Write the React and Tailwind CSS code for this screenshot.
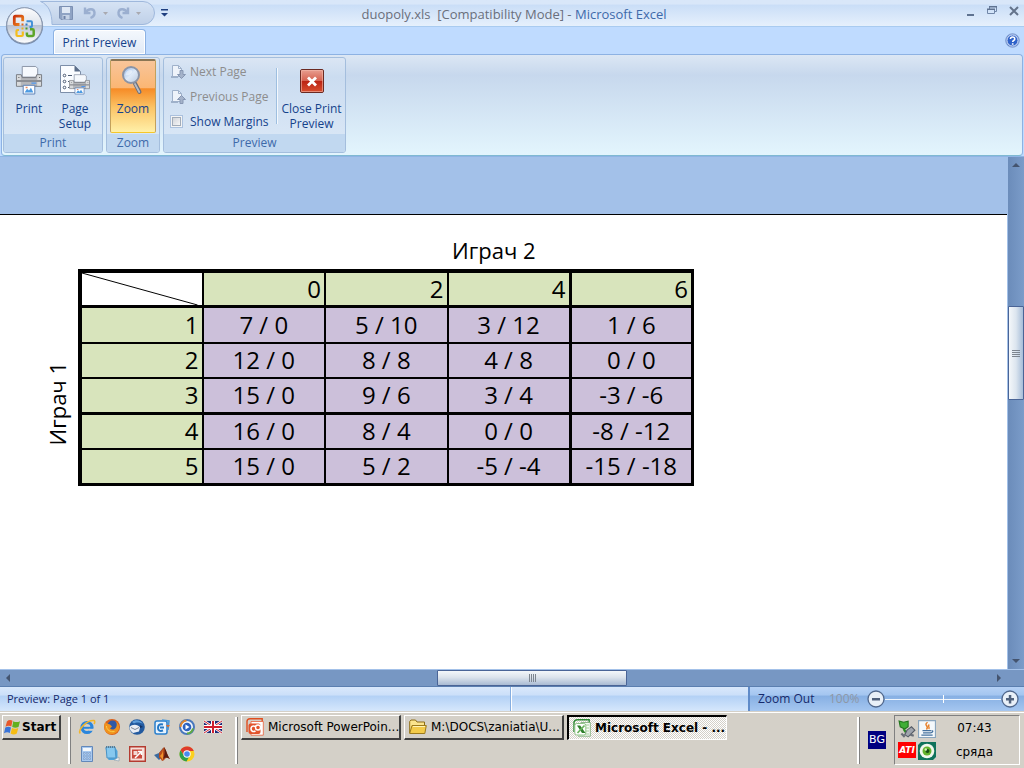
import React from "react";

const rows = [
  ["1", "7 / 0", "5 / 10", "3 / 12", "1 / 6"],
  ["2", "12 / 0", "8 / 8", "4 / 8", "0 / 0"],
  ["3", "15 / 0", "9 / 6", "3 / 4", "-3 / -6"],
  ["4", "16 / 0", "8 / 4", "0 / 0", "-8 / -12"],
  ["5", "15 / 0", "5 / 2", "-5 / -4", "-15 / -18"],
];

function OfficeOrb() {
  return (
    <svg viewBox="0 0 40 40" className="block h-10 w-10" aria-hidden="true">
      <defs>
        <linearGradient id="orb" x1="0" y1="0" x2="0" y2="1">
          <stop offset="0" stopColor="#fdfdfe" />
          <stop offset="0.48" stopColor="#dfe4ec" />
          <stop offset="0.5" stopColor="#b9c3d3" />
          <stop offset="1" stopColor="#ffffff" />
        </linearGradient>
        <linearGradient id="orbRed" x1="0" y1="0" x2="1" y2="1">
          <stop offset="0" stopColor="#c9330c" />
          <stop offset="1" stopColor="#f08c1e" />
        </linearGradient>
      </defs>
      <circle cx="20.500" cy="20" r="18.600" fill="#5d6f8d" opacity="0.75" />
      <circle cx="20.500" cy="19.500" r="17.800" fill="url(#orb)" stroke="#8b99b0" />
      <g fill="none">
        <path d="M15.500 18.500h-4q-1.200 0-1.200-1.200v-6q0-1.200 1.200-1.200h6q1.200 0 1.200 1.200v4" stroke="url(#orbRed)" strokeWidth="2.800" />
        <path d="M22.500 15.200h4.500q1 0 1 1v3.800q0 1-1 1h-1.500" stroke="#3f8fd6" strokeWidth="1.900" />
        <path d="M18.800 25.500v3.500q0 1-1 1h-4.300q-1 0-1-1v-4q0-1 1-1h1.500" stroke="#f4bd1d" strokeWidth="2.200" />
        <path d="M26 23.200h2.500q1.200 0 1.200 1.200v4.400q0 1.200-1.200 1.200h-4.400q-1.200 0-1.200-1.200v-2.300" stroke="#5da528" strokeWidth="2.500" />
      </g>
      <path d="M17.500 17.500h2v2h-2z" fill="#e0641a" />
      <path d="M21.500 17.500h2v2h-2z" fill="#2f7ac4" />
      <path d="M17.500 21.500h2v2h-2z" fill="#eab222" />
      <path d="M21.500 21.500h2v2h-2z" fill="#4b9a2a" />
    </svg>
  );
}

const SaveIcon = () => (
  <svg viewBox="0 0 14 14" className="h-3.5 w-3.5" aria-hidden="true">
    <path d="M.5.5h13v13H2L.5 12z" fill="#8fa3c4" stroke="#7c90b3" />
    <path d="M3 1h8v6H3z" fill="#dfe8f5" />
    <path d="M3.500 9h7v4.500h-7z" fill="#c5d2e6" />
    <path d="M4.500 10h2v3h-2z" fill="#6f83a8" />
  </svg>
);

const UndoIcon = () => (
  <svg viewBox="0 0 14 14" className="h-3.5 w-3.5" aria-hidden="true">
    <path d="M2 1.500v5.500h5.500M2.500 6.500C5 2.500 11 2 11.500 6.500c.2 2.500-1.500 4.500-4 5.500" fill="none" stroke="#9bafd0" strokeWidth="2.400" />
  </svg>
);

const RedoIcon = () => (
  <svg viewBox="0 0 14 14" className="h-3.5 w-3.5" aria-hidden="true">
    <path d="M12 1.500v5.500H6.500M11.500 6.500C9 2.500 3 2 2.500 6.500c-.2 2.500 1.500 4.500 4 5.500" fill="none" stroke="#9bafd0" strokeWidth="2.400" />
  </svg>
);

const DownMark = () => (
  <svg viewBox="0 0 5 3" className="h-[3px] w-[5px]" aria-hidden="true">
    <path d="M0 0h5L2.500 3z" fill="#a9a9b0" />
  </svg>
);

const PrinterShape = () => (
  <>
    <path d="M7.500 1h14l2 2v9h-16z" fill="#f6f9fd" stroke="#8a94a6" />
    <path d="M1.500 9.500h5l1 3h14l1-3h5v12h-26z" fill="#b4b6ba" stroke="#76797f" />
    <path d="M2 10h4v11H2zM23 10h4v11h-4z" fill="#d8dadc" />
    <path d="M2 15h25v2H2z" fill="#8b8e94" />
    <path d="M17 17.500h5v1.500h-5z" fill="#4f97ef" />
    <path d="M3.500 12h1v1h-1zM25 12h1v1h-1z" fill="#555" />
    <path d="M8.500 20.500h12v9h-12z" fill="#fff" stroke="#5a7fb5" />
    <path d="M10 28l2.500-4 2 2 2-3 2.500 5z" fill="#4d9be3" />
    <path d="M11 22h2v1.500h-2z" fill="#e58a63" />
  </>
);

const PrintIcon = () => (
  <svg viewBox="0 0 29 30" className="h-8 w-7" aria-hidden="true">
    <PrinterShape />
  </svg>
);

const PageSetupIcon = () => (
  <svg viewBox="0 0 32 32" className="h-8 w-8" aria-hidden="true">
    <path d="M1.500 1.500h14l6 6v21h-20z" fill="#fafcff" stroke="#7c8ea9" />
    <path d="M15.500 1.500l6 6h-6z" fill="#5c6e8a" />
    <g fill="#fff" stroke="#4b5a73">
      <circle cx="5.500" cy="11.500" r="1.300" />
      <circle cx="5.500" cy="17.500" r="1.300" />
      <circle cx="5.500" cy="23.500" r="1.300" />
      <path d="M9 11.500h4M9 17.500h1M9 23.500h1" />
    </g>
    <g transform="translate(9.500 10) scale(.76 .68)">
      <PrinterShape />
    </g>
  </svg>
);

const ZoomIcon = () => (
  <svg viewBox="0 0 32 32" className="h-8 w-8" aria-hidden="true">
    <defs>
      <linearGradient id="lens" x1="0" y1="0" x2="1" y2="1">
        <stop offset="0" stopColor="#8db4e8" />
        <stop offset="0.5" stopColor="#dfeaf8" />
        <stop offset="1" stopColor="#b9c8dc" />
      </linearGradient>
    </defs>
    <path d="M18 19.500l4.500 8.500" stroke="#6b6f79" strokeWidth="4" strokeLinecap="round" />
    <path d="M18 20l4.300 8" stroke="#b8bcc5" strokeWidth="1.800" strokeLinecap="round" />
    <circle cx="14" cy="11" r="8" fill="url(#lens)" stroke="#8c94a5" strokeWidth="2" />
    <path d="M8.500 10c1-4 5-5 7-3-1 3-3 4-7 4.500z" fill="#fff" opacity="0.45" />
  </svg>
);

function PageArrow({ up }) {
  return (
    <svg viewBox="0 0 16 16" className="h-4 w-4" aria-hidden="true">
      <path d="M2.500 1.500h6l3 3v8h-9z" fill="#eef3fa" stroke="#9fb1ca" />
      <path d="M8.500 1.500v3h3" fill="none" stroke="#9fb1ca" />
      <path d="M1 13h7" stroke="#9fb1ca" strokeWidth="2" />
      <path
        d={up ? "M11.500 6.500l4 4h-2.500v4h-3v-4H7.500z" : "M10 6.500h3v4h2.500l-4 4-4-4H10z"}
        fill="#a5b3ca"
        stroke="#8797b3"
      />
    </svg>
  );
}

const CloseIcon = () => (
  <svg viewBox="0 0 24 24" className="h-6 w-6" aria-hidden="true">
    <defs>
      <linearGradient id="closeRed" x1="0" y1="0" x2="0" y2="1">
        <stop offset="0" stopColor="#e9a092" />
        <stop offset="0.5" stopColor="#d5604e" />
        <stop offset="0.52" stopColor="#bc2414" />
        <stop offset="1" stopColor="#d9502f" />
      </linearGradient>
    </defs>
    <rect x="0.500" y="0.500" width="23" height="23" rx="1.500" fill="url(#closeRed)" stroke="#6a2a22" />
    <path d="M1.500 1.500h21v21h-21z" fill="none" stroke="#f3b9ac" opacity="0.600" />
    <path d="M8 8.500l8 8M16 8.500l-8 8" stroke="#fff" strokeWidth="2.800" />
  </svg>
);

const Triangle = ({ d }) => (
  <svg viewBox="0 0 10 10" className="h-2.5 w-2.5" aria-hidden="true">
    <path d={d} fill="#44546f" />
  </svg>
);

const WindowsIcon = () => (
  <svg viewBox="0 0 17 16" className="h-4 w-[17px]" aria-hidden="true">
    <path d="M3 2.500Q5.500 0 8.500 1.800L7.300 7.500Q4.500 6 1.500 7.800z" fill="#e8582a" />
    <path d="M9.300 2.200Q12.500 4 16 2.200L14.500 8Q11.500 9.500 8.200 8z" fill="#62b01e" />
    <path d="M1.300 8.600Q4.300 7 7 8.400L5.800 14Q3 12.500 0 14.300z" fill="#3a74d8" />
    <path d="M8 8.900Q11.300 10.500 14.300 9L12.800 14.500Q9.800 16.300 6.600 14.500z" fill="#f6bd14" />
  </svg>
);

const quick = [
  ["Internet Explorer", (
    <>
      <circle cx="8" cy="8.500" r="5" fill="none" stroke="#2a86dd" strokeWidth="3.200" />
      <path d="M3 8.800h10" stroke="#2a86dd" strokeWidth="2" />
      <path d="M10 10.800h6" stroke="#d4d0c8" strokeWidth="2" />
      <path d="M1 14.500C-1 10 8 1 15 1.500c1 .5 1 2 0 3.500" fill="none" stroke="#f2b52a" strokeWidth="1.600" />
    </>
  )],
  ["Firefox", (
    <>
      <circle cx="8" cy="8" r="8" fill="#d9601a" />
      <circle cx="8.500" cy="6.500" r="5" fill="#3158a5" />
      <path d="M1 3.500c1 1 3 1 5 2l2 2-2 2c2 2 5 1 6-1 1-2 1-4 0-6 4 3 4 8 1 10.500-3 3-8 3-11 0C0 11 0 6 1 3.500z" fill="#f0921e" />
      <path d="M2.500 7c0 4 4 6.500 8 5.500" fill="none" stroke="#fbd04a" />
    </>
  )],
  ["Thunderbird", (
    <>
      <circle cx="8" cy="8" r="7.800" fill="#235a9f" />
      <path d="M.5 8C3 5 9 5 11 8.500l-1 4-6 1.500C2 12.500.5 11 .5 8z" fill="#e9edf4" />
      <path d="M3 3c3-3 9-2 11 2-3-2-7-2-9-.5z" fill="#5d9ddb" />
      <path d="M2 8.500l4 2 4-2" fill="none" stroke="#7b8597" />
      <path d="M11 6l3 2-3 1z" fill="#122f60" />
    </>
  )],
  ["Outlook Express", (
    <>
      <rect x="1" y="2" width="12" height="13" rx="2" fill="#e8f3fd" stroke="#297fcd" strokeWidth="1.500" />
      <path d="M9 5.500c-4-1-5 1-5 3.500s2 3.500 5 2.500M6 8.500h4" fill="none" stroke="#2377c5" strokeWidth="2" />
      <path d="M8 1l7 1-1 9" fill="none" stroke="#4597dd" strokeWidth="1.500" />
      <path d="M12 6h4l-2 2.500z" fill="#df6a28" />
    </>
  )],
  ["Media Player", (
    <>
      <circle cx="8" cy="8" r="7" fill="#f2f5fa" stroke="#4978bd" strokeWidth="2" />
      <path d="M1.500 8a6.500 6.500 0 0 1 6-6.500" fill="none" stroke="#e1862f" strokeWidth="2" />
      <path d="M8 14.500a6.500 6.500 0 0 0 6-5" fill="none" stroke="#61a943" strokeWidth="2" />
      <circle cx="8" cy="8" r="4.300" fill="#2d62bf" />
      <path d="M6.500 5.500l4 2.500-4 2.500z" fill="#fff" />
    </>
  )],
  ["English (UK)", (
    <>
      <path d="M0 2h18v12H0z" fill="#1b2a78" />
      <path d="M0 2l18 12M18 2L0 14" stroke="#fff" strokeWidth="2.600" />
      <path d="M0 2l18 12M18 2L0 14" stroke="#d01f2e" />
      <path d="M9 2v12M0 8h18" stroke="#fff" strokeWidth="4" />
      <path d="M9 2v12M0 8h18" stroke="#d01f2e" strokeWidth="2" />
    </>
  )],
  ["Calculator", (
    <>
      <path d="M2.500.5h11v15h-11z" fill="#a9c9ef" stroke="#6288ba" />
      <path d="M4 2h8v3H4z" fill="#f4f8fc" />
      <g fill="#fff" stroke="#4d7cb8" strokeWidth=".5">
        <path d="M4.500 6.500h1.500v1.500H4.500zM7.300 6.500h1.500v1.500H7.300zM10 6.500h1.500v1.500H10zM4.500 9.300h1.500v1.500H4.500zM7.300 9.300h1.500v1.500H7.300zM10 9.300h1.500v1.500H10zM4.500 12h1.500v1.500H4.500zM7.300 12h1.500v1.500H7.300zM10 12h1.500v1.500H10z" />
      </g>
    </>
  )],
  ["Notepad", (
    <>
      <path d="M1.500 2h10l2 3v9h-9z" fill="#4da4dd" />
      <path d="M2 1h9l1 11H3z" fill="#86c8ef" stroke="#4a93c5" />
      <path d="M2 1h9" stroke="#5a7b92" strokeDasharray="1 1" strokeWidth="2" />
      <path d="M10 14l5 1v-4z" fill="#eceff2" stroke="#879cab" strokeWidth=".6" />
    </>
  )],
  ["Picture Manager", (
    <>
      <path d="M.7.7h15.600v14.600H.7z" fill="#f6dfd9" stroke="#b43b30" strokeWidth="1.400" />
      <path d="M3 3.500h10v9H3z" fill="#c9493c" />
      <path d="M4.500 5h4v4h-4z" fill="#f3d9d3" />
      <path d="M6 12l6-6M9 5.500h3.500V9" stroke="#fff" strokeWidth="1.500" fill="none" />
    </>
  )],
  ["MATLAB", (
    <>
      <path d="M0 9l5-2 4-5 1 7-5 5z" fill="#3b6a9f" />
      <path d="M5 7l5-6c2 2 3 8 6 12-2-1-3-2-5 0-1 1-2 2-3 2-1-2-2-3-3-3z" fill="#b84c1c" />
      <path d="M10 1c1 3 1 8-1 12 4-3 4-1 7 0-3-4-4-10-6-12z" fill="#5a1d12" />
      <path d="M9 3c0 3-1 5-3 7l3 4z" fill="#f0932c" />
    </>
  )],
  ["Chrome", (
    <>
      <circle cx="8" cy="8" r="7.500" fill="#fbd01f" />
      <path d="M1.500 4.250A7.500 7.500 0 0 1 14.800 5H8L5 9.700z" fill="#de3b2c" />
      <path d="M1.500 4.250A7.500 7.500 0 0 0 7.500 15.500L10.800 9.500 5 9.700z" fill="#2fa04a" />
      <circle cx="8" cy="8" r="3.700" fill="#fff" />
      <circle cx="8" cy="8" r="2.800" fill="#4a8bef" />
    </>
  )],
];

const PowerPointIcon = () => (
  <svg viewBox="0 0 18 18" className="h-[18px] w-[18px] shrink-0" aria-hidden="true">
    <path d="M1 3.500Q1 .8 4 .8h12.200v2.700M1 3v11" fill="none" stroke="#e04e1f" strokeWidth="1.400" />
    <path d="M5 3.500h12.300v13.700H5z" fill="#fff" stroke="#e8603a" strokeWidth="0.800" />
    <rect x="2.500" y="5.500" width="12" height="10.500" rx="2" fill="#e2532c" />
    <path d="M9.500 8.500c-3-1.200-4.500 0-4.500 2.300s2 3.400 4.500 2.200" fill="none" stroke="#fff" strokeWidth="1.600" />
    <circle cx="12" cy="9.500" r="2.500" fill="none" stroke="#fff" strokeWidth="1.400" />
  </svg>
);

const FolderIcon = () => (
  <svg viewBox="0 0 18 18" className="h-[18px] w-[18px] shrink-0" aria-hidden="true">
    <path d="M.7 15V3.500L2 2h4.500L8 4h7.500v4" fill="#fbe48c" stroke="#8e6d16" />
    <path d="M.7 15.500L3 7.500h14.300l-1.500 8z" fill="#f3cb4a" stroke="#9c7a1c" />
    <path d="M4 8.500h12" stroke="#fff3b5" />
  </svg>
);

const ExcelIcon = () => (
  <svg viewBox="0 0 18 18" className="h-[18px] w-[18px] shrink-0" aria-hidden="true">
    <path d="M1 13V3Q1.500 1 4 .8h12.200v4" fill="none" stroke="#2f8a35" strokeWidth="1.400" />
    <path d="M8 3.500h9.300v13.700H5" fill="#f7fbf5" stroke="#77a872" strokeWidth="0.800" />
    <path d="M13 6h3M13 9h3M13 12h3M11 15h5" stroke="#a4cd9a" />
    <rect x="1.800" y="4.500" width="11" height="11.500" rx="2" fill="#fff" stroke="#8fc387" />
    <path d="M4 6.500h3.200L12.500 14H9z" fill="#2f7f2b" />
    <path d="M11.500 6.500L4.500 14" stroke="#69b25c" strokeWidth="1.700" />
  </svg>
);

const tray = [
  ["Safely Remove Hardware", (
    <>
      <path d="M1 1l4 1 4-1v5l-3 2-4-2z" fill="#3fae36" stroke="#22761d" />
      <path d="M5 8l2 3" stroke="#2b8825" strokeWidth="2" />
      <path d="M8 9l4-3 3 3-6 6-3-2z" fill="#a0a5ad" stroke="#555b66" />
      <path d="M3 12l3 3M11 13l3 1" stroke="#6a6f78" strokeWidth="2" />
    </>
  )],
  ["Java", (
    <>
      <path d="M.5.5h15v15H.5z" fill="#f4f8fb" stroke="#8aa5bd" />
      <path d="M8.500 2c-4 3 2 3-1 6.500M10 4c-2 2 1 2-.5 4" fill="none" stroke="#e8802a" strokeWidth="1.300" />
      <path d="M4 9.500h7.500M4.500 11.500h6.500M3 13.500h10M12 9.500c2 0 1 2-1 2" fill="none" stroke="#45719e" strokeWidth="1.200" />
    </>
  )],
];

function Task({ icon, children, active }) {
  return (
    <button
      type="button"
      aria-pressed={active ? "true" : "false"}
      className={
        active
          ? "flex h-[25px] w-[160px] items-center gap-1 border-t-2 border-r border-b border-l-2 border-t-black border-l-black border-r-white border-b-white bg-[repeating-conic-gradient(#ffffff_0_25%,#d4d0c8_0_50%)] bg-[length:2px_2px] px-1 text-xs font-bold whitespace-nowrap text-black"
          : "flex h-[25px] w-[160px] items-center gap-1 border-t border-r-2 border-b-2 border-l border-t-white border-l-white border-r-[#404040] border-b-[#404040] bg-[#d4d0c8] px-1 text-xs whitespace-nowrap text-black"
      }
    >
      {icon}
      <span>{children}</span>
    </button>
  );
}

const Grip = () => (
  <span className="block h-[47px] w-[3px] border-l-2 border-r border-l-white border-r-[#808080]" />
);

export default function App() {
  return (
    <div className="flex min-h-screen flex-col bg-[#bfdbff] font-['Open_Sans',sans-serif] text-xs text-[#15428b]">
      <div className="relative">
        <header className="flex h-[27px] items-center border-b border-[#a9cbf0] bg-linear-to-b from-[#d9e7f9] from-15% via-[#cadef7] via-20% to-[#e6f0fc]">
          <div className="flex w-44 items-center pl-10">
            <div className="relative h-6 w-[115px]">
              <svg viewBox="0 0 115 24" className="absolute inset-0 h-full w-full" aria-hidden="true">
                <defs>
                  <linearGradient id="qat" x1="0" y1="0" x2="0" y2="1">
                    <stop offset="0" stopColor="#d6e3f4" />
                    <stop offset="1" stopColor="#bfd0e8" />
                  </linearGradient>
                </defs>
                <path d="M.5.500H103a11.500 11.500 0 0 1 0 23H12C12 12 9 4 .5.500z" fill="url(#qat)" stroke="#9fb8dc" />
              </svg>
              <div className="relative flex h-full items-center pl-[19px]">
                <button type="button" aria-label="Save"><SaveIcon /></button>
                <button type="button" aria-label="Undo" className="ml-2.5"><UndoIcon /></button>
                <button type="button" aria-label="Undo list" className="ml-1.5"><DownMark /></button>
                <button type="button" aria-label="Redo" className="ml-2"><RedoIcon /></button>
                <button type="button" aria-label="Redo list" className="ml-1.5"><DownMark /></button>
              </div>
            </div>
            <button type="button" aria-label="Customize Quick Access Toolbar" className="ml-1.5">
              <svg viewBox="0 0 7 8" className="h-2 w-[7px]" aria-hidden="true">
                <path d="M0 0h7v1.500H0zM0 4h7L3.500 7.500z" fill="#1f3f80" />
              </svg>
            </button>
          </div>
          <h1 className="flex-1 pt-1 text-center text-[13px] whitespace-pre text-[#6a6f7c]">
            duopoly.xls{"  "}[Compatibility Mode] - <span className="text-[#3e6aaa]">Microsoft Excel</span>
          </h1>
          <div className="flex w-[172px] items-center justify-end gap-2.5 pr-1 pb-1">
            <button type="button" aria-label="Minimize" className="h-3 w-3">
              <svg viewBox="0 0 12 12" className="h-3 w-3"><path d="M3 9h7v2H3z" fill="#5f7391" /></svg>
            </button>
            <button type="button" aria-label="Restore" className="h-3 w-3">
              <svg viewBox="0 0 12 12" className="h-3 w-3">
                <path d="M3.500 4V1.500h7v5H9M1.500 4.500h7v4h-7z" fill="none" stroke="#7187a8" />
                <path d="M3 1h8v1.500H3zM1 3.500h8V5H1z" fill="#5f7391" />
              </svg>
            </button>
            <button type="button" aria-label="Close" className="h-3 w-3">
              <svg viewBox="0 0 12 12" className="h-3 w-3"><path d="M2 2l8 8M10 2l-8 8" stroke="#64738b" strokeWidth="2" /></svg>
            </button>
          </div>
        </header>
        <button type="button" aria-label="Office Button" className="absolute top-1.5 left-1">
          <OfficeOrb />
        </button>
        <nav role="tablist" className="flex h-[27px] items-end justify-between pr-1 pl-[53px]">
          <button
            type="button"
            role="tab"
            aria-selected="true"
            className="h-[25px] w-[93px] rounded-t-[4px] border border-b-0 border-[#8db2e3] bg-linear-to-b from-[#f4f8fd] to-[#e1eaf6] pt-0.5 text-center shadow-[inset_0_0_0_1px_#ffffff]"
          >
            Print Preview
          </button>
          <button type="button" aria-label="Help" className="pb-1.5">
            <svg viewBox="0 0 16 16" className="h-[15px] w-[15px]" aria-hidden="true">
              <circle cx="8" cy="8" r="7.300" fill="#2f62c9" stroke="#89a3d0" />
              <circle cx="8" cy="8" r="6" fill="none" stroke="#fff" />
              <path d="M5.800 6.500c0-3 4.600-3 4.600-.2 0 1.700-2.200 1.600-2.200 3.400M8.200 10.800v1.600" fill="none" stroke="#fff" strokeWidth="1.700" />
            </svg>
          </button>
        </nav>
      </div>

      <section
        aria-label="Ribbon"
        className="mx-px flex h-[102px] gap-[3px] rounded-[4px] border border-[#8db2e3] border-b-[#7fb9d2] bg-linear-to-b from-[#dce7f4] from-0% via-[#c7d8ed] via-20% to-[#e3f5fd] px-px py-0.5"
      >
        <div className="flex w-[100px] flex-col overflow-hidden rounded-[3px] border border-[#a4bedd] bg-linear-to-b from-[#dbe6f4] via-[#cbdcf0] via-20% to-[#dce9f7]">
          <div className="flex flex-1 items-start pt-1.5 pl-px">
            <button type="button" className="flex w-12 flex-col items-center gap-[5px] leading-[15px]">
              <PrintIcon />
              Print
            </button>
            <button type="button" className="flex w-11 flex-col items-center gap-[5px] leading-[15px]">
              <PageSetupIcon />
              <span>Page Setup</span>
            </button>
          </div>
          <div className="h-[18px] shrink-0 bg-[#c1d8f0] text-center leading-[18px] text-[#3e6aaa]">Print</div>
        </div>
        <div className="flex w-[54px] flex-col overflow-hidden rounded-[3px] border border-[#a4bedd] bg-linear-to-b from-[#dbe6f4] via-[#cbdcf0] via-20% to-[#dce9f7]">
          <div className="flex flex-1 px-[3px] pt-px pb-px">
            <button
              type="button"
              aria-pressed="true"
              className="flex w-full flex-col items-center gap-[5px] rounded-[2px] border border-t-2 border-[#c3a15c] border-t-[#8b7654] border-b-[#f5c72a] bg-[linear-gradient(#f8c59a_0%,#fbb673_38%,#f68b26_39%,#fbc365_65%,#fff0a8_100%)] pt-[3px] leading-[15px]"
            >
              <ZoomIcon />
              Zoom
            </button>
          </div>
          <div className="h-[18px] shrink-0 bg-[#c1d8f0] text-center leading-[18px] text-[#3e6aaa]">Zoom</div>
        </div>
        <div className="flex w-[183px] flex-col overflow-hidden rounded-[3px] border border-[#a4bedd] bg-linear-to-b from-[#dbe6f4] via-[#cbdcf0] via-20% to-[#dce9f7]">
          <div className="flex flex-1 items-start">
            <div className="flex w-28 flex-col pt-px pl-1.5 whitespace-nowrap">
              <button type="button" disabled className="flex h-[25px] items-center gap-1 text-[#8d8d8d]">
                <PageArrow />
                Next Page
              </button>
              <button type="button" disabled className="flex h-[25px] items-center gap-1 text-[#8d8d8d]">
                <PageArrow up />
                Previous Page
              </button>
              <label className="flex h-[25px] items-center gap-[7px]">
                <input
                  type="checkbox"
                  className="h-[13px] w-[13px] appearance-none border border-[#abc1de] bg-linear-to-br from-[#c9ccd2] to-white shadow-[inset_0_0_0_1px_#f4f4f4,inset_0_0_0_2px_#a2acb9]"
                />
                Show Margins
              </label>
            </div>
            <span className="mt-2.5 h-14 w-0.5 border-r border-l border-r-[#f4f8fd] border-l-[#9ebfe0]" />
            <button type="button" className="flex flex-1 flex-col items-center gap-2 pt-[11px] leading-[15px]">
              <CloseIcon />
              <span className="whitespace-nowrap">Close Print<br />Preview</span>
            </button>
          </div>
          <div className="h-[18px] shrink-0 bg-[#c1d8f0] text-center leading-[18px] text-[#3e6aaa]">Preview</div>
        </div>
      </section>

      <main className="flex flex-1 border-t border-[#8fb4e4]">
        <div className="flex flex-1 flex-col bg-[#a3c1e9] pt-[57px]">
          <div className="flex-1 border-t border-black bg-white pt-[19px] text-2xl text-black">
            <p className="pl-[452px] text-[22px] leading-8">Играч 2</p>
            <div className="flex items-end pt-[3px]">
              <div className="flex w-[78px] justify-center pb-10 pl-9">
                <span className="rotate-180 text-[22px] leading-8 [writing-mode:vertical-rl]">Играч 1</span>
              </div>
              <table className="w-[616px] table-fixed border-collapse leading-8">
                <thead>
                  <tr className="h-[35px]">
                    <td className="relative border-2 border-t-4 border-b-3 border-l-4 border-black p-0">
                      <svg viewBox="0 0 120 32" preserveAspectRatio="none" className="absolute inset-0 h-full w-full" aria-hidden="true">
                        <path d="M0 0l116 32" stroke="#000" />
                      </svg>
                    </td>
                    {["0", "2", "4", "6"].map((h, i) => (
                      <th
                        key={h}
                        scope="col"
                        className={
                          "border-2 border-t-4 border-b-3 border-black bg-[#d8e4bc] py-0 pr-[3px] pl-0 text-right font-normal " +
                          (i > 1 ? "border-r-3" : "")
                        }
                      >
                        {h}
                      </th>
                    ))}
                  </tr>
                </thead>
                <tbody>
                  {rows.map((row, r) => (
                    <tr key={row[0]} className={r % 2 ? "h-[35px] leading-8" : "h-9 leading-8"}>
                      <th
                        scope="row"
                        className={
                          "border-2 border-l-4 border-black bg-[#d8e4bc] py-0 pr-[3px] pl-0 text-right font-normal " +
                          (r === 2 || r === 4 ? "border-b-3" : "")
                        }
                      >
                        {row[0]}
                      </th>
                      {row.slice(1).map((v, c) => (
                        <td
                          key={c}
                          className={
                            "border-2 border-black bg-[#ccc0da] p-0 text-center " +
                            (r === 2 || r === 4 ? "border-b-3 " : "") +
                            (c > 1 ? "border-r-3" : "")
                          }
                        >
                          {v}
                        </td>
                      ))}
                    </tr>
                  ))}
                </tbody>
              </table>
            </div>
          </div>
        </div>
        <div className="flex w-[17px] flex-col border-l border-[#a3c1e9] bg-linear-to-r from-[#6b8cba] to-[#7b9cc9]">
          <button type="button" aria-label="Scroll up" className="flex h-4 items-center justify-center"><Triangle d="M1 7h8L5 3z" /></button>
          <div className="grow-[133]" />
          <div className="flex h-[94px] flex-col items-center justify-center gap-px rounded-[1px] border border-[#4a6496] bg-linear-to-r from-[#f4f7fa] via-[#dce5ef] to-[#a7bdd8]">
            <span className="h-px w-2 bg-[#7d858f]" />
            <span className="h-px w-2 bg-[#7d858f]" />
            <span className="h-px w-2 bg-[#7d858f]" />
            <span className="h-px w-2 bg-[#7d858f]" />
          </div>
          <div className="grow-[253]" />
          <button type="button" aria-label="Scroll down" className="flex h-4 items-center justify-center"><Triangle d="M1 3h8L5 7z" /></button>
        </div>
      </main>

      <div className="flex h-[18px] border-t border-b border-t-[#a3c1e9] border-b-[#5b7fb0] bg-[#7797c3]">
        <button type="button" aria-label="Scroll left" className="flex w-4 items-center justify-center"><Triangle d="M7 1v8L3 5z" /></button>
        <div className="grow-[421]" />
        <div className="flex w-[190px] items-center justify-center gap-px rounded-[1px] border border-[#4a6496] bg-linear-to-b from-[#f4f7fa] via-[#dce3ec] via-45% to-[#a9bbd3]">
          <span className="h-2 w-px bg-[#7d858f]" />
          <span className="h-2 w-px bg-[#7d858f]" />
          <span className="h-2 w-px bg-[#7d858f]" />
          <span className="h-2 w-px bg-[#7d858f]" />
        </div>
        <div className="grow-[364]" />
        <button type="button" aria-label="Scroll right" className="mr-[17px] flex w-4 items-center justify-center"><Triangle d="M3 1v8l4-4z" /></button>
      </div>

      <div className="flex h-6 bg-[linear-gradient(#d9e8fb_0%,#cbdff9_35%,#b2d0f5_36%,#d6e7fc_100%)] leading-6 text-[#15296b]">
        <div className="w-[511px] border-r border-[#86aee0] pl-[7px] text-[11px]">Preview: Page 1 of 1</div>
        <div className="flex-1 border-l border-white" />
        <div className="flex w-[276px] items-center border-l-2 border-[#5f8bc9] bg-[linear-gradient(#b5d1f5_0%,#a3c5f0_35%,#86afe3_36%,#a5c6f0_100%)] pl-2">
          <span className="w-[71px]">Zoom Out</span>
          <span className="w-[38px] text-[#8e97a6]">100%</span>
          <button type="button" aria-label="Zoom out" className="shrink-0">
            <svg viewBox="0 0 18 18" className="h-[18px] w-[18px]">
              <circle cx="9" cy="9" r="8" fill="#e9f0f8" stroke="#50678c" strokeWidth="1.300" />
              <path d="M5 8h8v2.500H5z" fill="#50617c" />
            </svg>
          </button>
          <div className="flex h-2 flex-1 items-center justify-center bg-[linear-gradient(#f0f6fd,#f0f6fd)] bg-[length:100%_1px] bg-center bg-no-repeat">
            <span className="h-2 w-px bg-white" />
          </div>
          <button type="button" aria-label="Zoom in" className="mr-[5px] shrink-0">
            <svg viewBox="0 0 18 18" className="h-[18px] w-[18px]">
              <circle cx="9" cy="9" r="8" fill="#e9f0f8" stroke="#50678c" strokeWidth="1.300" />
              <path d="M5 8h8v2.500H5zM7.800 5h2.500v8.500H7.800z" fill="#50617c" />
            </svg>
          </button>
        </div>
      </div>

      <footer className="flex h-[57px] items-start border-t border-[#d4d0c8] bg-[#d4d0c8] font-['DejaVu_Sans',sans-serif] text-black">
        <div className="flex h-14 w-full items-start border-t border-white pt-0.5 pl-0.5">
          <button
            type="button"
            className="flex h-[25px] w-[59px] shrink-0 items-center gap-px border-t border-r-2 border-b-2 border-l border-t-white border-l-white border-r-[#404040] border-b-[#404040] pl-px text-xs font-bold"
          >
            <WindowsIcon />
            Start
          </button>
          <div className="flex gap-2 pt-0.5 pl-[7px]">
            <Grip />
            <div className="grid grid-cols-6 gap-x-[9px] gap-y-2 pt-0.5">
              {quick.map(([name, art]) => (
                <button key={name} type="button" aria-label={name} className="h-4 w-4">
                  <svg viewBox="0 0 16 16" className="h-4 w-4 overflow-visible" aria-hidden="true">{art}</svg>
                </button>
              ))}
            </div>
          </div>
          <div className="flex flex-1 gap-[3px] pl-[15px]">
            <div className="pt-0.5"><Grip /></div>
            <Task icon={<PowerPointIcon />}>Microsoft PowerPoin...</Task>
            <Task icon={<FolderIcon />}>M:\DOCS\zaniatia\U...</Task>
            <Task icon={<ExcelIcon />} active>Microsoft Excel - ...</Task>
          </div>
          <div className="flex items-center gap-2 pr-1">
            <Grip />
            <button type="button" className="h-[18px] w-[18px] bg-[#000080] text-center text-[11px] leading-[18px] text-white">BG</button>
            <div className="flex h-[50px] w-[126px] items-center justify-between border border-t-[#808080] border-r-white border-b-white border-l-[#808080] pr-[26px] pl-[3px]">
              <div className="grid grid-cols-2 gap-x-0.5 gap-y-1">
                {tray.map(([name, art]) => (
                  <button key={name} type="button" aria-label={name} className="h-[18px] w-[18px]">
                    <svg viewBox="0 0 16 16" className="h-[18px] w-[18px]" aria-hidden="true">{art}</svg>
                  </button>
                ))}
                <button type="button" className="h-4 w-[18px] bg-[#f00] text-center text-[9px] leading-4 font-bold text-white italic">ATI</button>
                <button type="button" aria-label="Monitor" className="h-[18px] w-[18px]">
                  <svg viewBox="0 0 18 18" className="h-[18px] w-[18px]" aria-hidden="true">
                    <path d="M0 3l3-3h15v15l-3 3H0z" fill="#10735c" />
                    <circle cx="9" cy="9" r="7.300" fill="#f2f8ee" />
                    <circle cx="9" cy="9" r="4.500" fill="#63b32c" />
                    <circle cx="9.500" cy="9" r="2" fill="#174d12" />
                    <circle cx="7.800" cy="7.500" r="1.200" fill="#d8f2b8" />
                  </svg>
                </button>
              </div>
              <div className="text-center text-xs leading-6">
                <div>07:43</div>
                <div>сряда</div>
              </div>
            </div>
          </div>
        </div>
      </footer>
    </div>
  );
}
